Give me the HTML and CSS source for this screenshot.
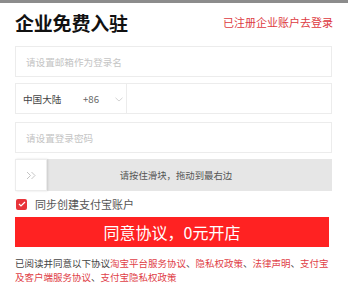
FILE: index.html
```html
<!DOCTYPE html>
<html lang="zh-CN">
<head>
<meta charset="utf-8">
<title>企业免费入驻</title>
<link rel="stylesheet" href="styles.css">
</head>
<body>
<div class="topbar"></div>
<div class="page">
  <div class="header">
    <h1 class="title">企业免费入驻</h1>
    <a class="login-link" href="#">已注册企业账户去登录</a>
  </div>
  <div class="field"><span class="placeholder">请设置邮箱作为登录名</span></div>
  <div class="field phone">
    <div class="country">
      <span class="country-name">中国大陆</span>
      <span class="code">+86</span>
      <svg class="chev" width="8" height="5" viewBox="0 0 8 5"><path d="M0.5 0.8 L4 4 L7.5 0.8" fill="none" stroke="#c8c8c8" stroke-width="0.8"/></svg>
    </div>
    <div class="phone-input"></div>
  </div>
  <div class="field pwd"><span class="placeholder">请设置登录密码</span></div>
  <div class="slider">
    <div class="handle">
      <svg width="11" height="9" viewBox="0 0 11 9"><path d="M1 1 L4.5 4.5 L1 8 M5.5 1 L9 4.5 L5.5 8" fill="none" stroke="#bdbdbd" stroke-width="0.9"/></svg>
    </div>
    <span class="slider-text">请按住滑块，拖动到最右边</span>
  </div>
  <label class="check-row">
    <span class="checkbox"><svg width="8" height="6" viewBox="0 0 8 6"><path d="M1 3 L3 5 L7 1" fill="none" stroke="#fff" stroke-width="1.2"/></svg></span>
    <span class="check-text">同步创建支付宝账户</span>
  </label>
  <button class="submit">同意协议，0元开店</button>
  <div class="terms">
    <p class="terms-line">已阅读并同意以下协议<a href="#">淘宝平台服务协议</a>、<a href="#">隐私权政策</a>、<a href="#">法律声明</a>、<a href="#">支付宝</a></p>
    <p class="terms-line"><a href="#">及客户端服务协议</a>、<a href="#">支付宝隐私权政策</a></p>
  </div>
</div>
</body>
</html>
```
FILE: styles.css
```css
* { box-sizing: border-box; }
body {
  margin: 0;
  width: 348px;
  height: 286px;
  overflow: hidden;
  background: #fff;
  font-family: "Noto Sans CJK SC", "Noto Sans", sans-serif;
  color: #333;
}
.topbar { height: 3px; background: #8c8c8c; }
.page { padding: 0 16px 0 15px; }
.header {
  height: 38px;
  display: flex;
  align-items: center;
  justify-content: space-between;
}
.title {
  margin: 0;
  font-size: 19px;
  font-weight: 700;
  color: #111;
  line-height: 1;
  letter-spacing: -0.2px;
}
.login-link {
  font-size: 11px;
  color: #dd3a3f;
  text-decoration: none;
  margin-right: -1px;
  margin-top: -1px;
}
.field {
  margin-top: 5px;
  height: 31px;
  border: 1px solid #ececec;
  display: flex;
  align-items: center;
  padding-left: 10px;
}
.placeholder { font-size: 9.6px; color: #c4c4c4; }
.phone { margin-top: 6px; padding-left: 0; }
.country {
  width: 111px;
  height: 100%;
  display: flex;
  align-items: center;
  padding-left: 7px;
  border-right: 1px solid #ececec;
  font-size: 9.6px;
  color: #444;
}
.country-name { width: 60px; }
.code { color: #666; width: 32px; }
.chev { margin-top: 1px; }
.phone-input { flex: 1; }
.pwd { margin-top: 8px; }
.slider {
  position: relative;
  margin-top: 6px;
  height: 32px;
  background: #e6e6e6;
  display: flex;
  align-items: center;
  justify-content: center;
}
.handle {
  position: absolute;
  left: 0;
  top: 0;
  width: 32px;
  height: 32px;
  background: #fff;
  border: 1px solid #ececec;
  box-shadow: 1px 0 2px rgba(0,0,0,0.12);
  display: flex;
  align-items: center;
  justify-content: center;
}
.slider-text { font-size: 9.4px; color: #555; margin-left: 5px; }
.check-row {
  height: 26px;
  display: flex;
  align-items: center;
  padding-left: 1px;
}
.checkbox {
  width: 11px;
  height: 11px;
  border-radius: 2px;
  background: #e8343a;
  display: flex;
  align-items: center;
  justify-content: center;
  margin-right: 8px;
}
.check-text { font-size: 11px; color: #555; }
.submit {
  display: block;
  width: 314px;
  height: 30px;
  border: 0;
  background: #ff2222;
  color: #fff;
  font-family: inherit;
  font-size: 16px;
  padding: 0;
  line-height: 30px;
}
.terms {
  margin-top: 9px;
  display: flex;
  flex-direction: column;
}
.terms-line {
  margin: 0;
  font-size: 9.5px;
  line-height: 14px;
  color: #444;
  white-space: nowrap;
}
.terms a { color: #e04047; text-decoration: none; }
```
